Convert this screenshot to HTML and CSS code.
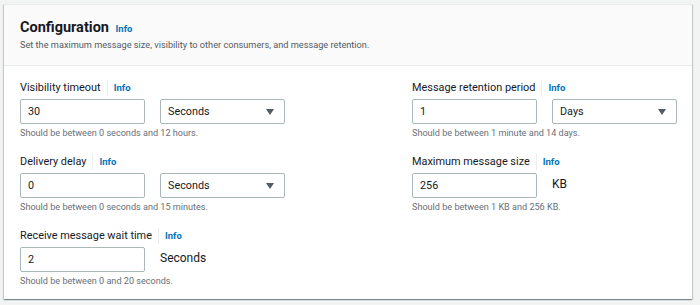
FILE: index.html
```html
<!DOCTYPE html>
<html lang="en">
<head>
  <meta charset="UTF-8" />
  <title>Configuration</title>
  <link rel="stylesheet" href="styles.css">
</head>
<body>
  <div class="panel">
    <div class="panel-header">
      <h2>Configuration <a class="info" href="#">Info</a></h2>
      <p class="desc">Set the maximum message size, visibility to other consumers, and message retention.</p>
    </div>

    <div class="panel-body">
      <div class="field">
        <div class="label">Visibility timeout <span class="sep"></span><a class="info" href="#">Info</a></div>
        <div class="controls">
          <div class="input">30</div>
          <div class="select">Seconds <span class="arrow"></span></div>
        </div>
        <div class="hint">Should be between 0 seconds and 12 hours.</div>
      </div>

      <div class="field">
        <div class="label">Message retention period <span class="sep"></span><a class="info" href="#">Info</a></div>
        <div class="controls">
          <div class="input">1</div>
          <div class="select">Days <span class="arrow"></span></div>
        </div>
        <div class="hint">Should be between 1 minute and 14 days.</div>
      </div>

      <div class="field">
        <div class="label">Delivery delay <span class="sep"></span><a class="info" href="#">Info</a></div>
        <div class="controls">
          <div class="input">0</div>
          <div class="select">Seconds <span class="arrow"></span></div>
        </div>
        <div class="hint">Should be between 0 seconds and 15 minutes.</div>
      </div>

      <div class="field">
        <div class="label">Maximum message size <span class="sep"></span><a class="info" href="#">Info</a></div>
        <div class="controls">
          <div class="input">256</div>
          <div class="unit">KB</div>
        </div>
        <div class="hint">Should be between 1 KB and 256 KB.</div>
      </div>

      <div class="field">
        <div class="label">Receive message wait time <span class="sep"></span><a class="info" href="#">Info</a></div>
        <div class="controls">
          <div class="input">2</div>
          <div class="unit">Seconds</div>
        </div>
        <div class="hint">Should be between 0 and 20 seconds.</div>
      </div>
    </div>
  </div>
</body>
</html>
```

FILE: styles.css
```css
body {
  margin: 0;
  padding: 4px;
  background: #f2f3f3;
  color: #16191f;
  font-family: Roboto, "Liberation Sans", sans-serif;
}
.panel {
  width: 688px;
  height: 295px;
  box-sizing: border-box;
  background: #ffffff;
  border-top: 1px solid #eaeded;
  box-shadow: 0 1px 1px 0 rgba(0, 28, 36, 0.3), 1px 1px 1px 0 rgba(0, 28, 36, 0.15), -1px 1px 1px 0 rgba(0, 28, 36, 0.15);
}
.panel-header {
  background: #fafafa;
  border-bottom: 1px solid #eaeded;
  padding: 13px 16px 14px;
}
h2 {
  margin: 0;
  font-size: 14.5px;
  line-height: 20px;
  font-weight: 700;
}
.info {
  color: #0073bb;
  font-size: 9.5px;
  font-weight: 700;
  text-decoration: none;
}
h2 .info {
  margin-left: 3px;
}
.desc {
  margin: 0;
  font-size: 9.2px;
  line-height: 12px;
  color: #545b64;
}
.panel-body {
  display: grid;
  grid-template-columns: 265px 265px;
  justify-content: space-between;
  row-gap: 14px;
  padding: 14px 15px 0 16px;
}
.label {
  display: flex;
  align-items: center;
  font-size: 10.9px;
  line-height: 16px;
}
.sep {
  width: 1px;
  height: 16px;
  background: #eaeded;
  margin: 0 6px;
}
.controls {
  display: flex;
  align-items: center;
  gap: 15px;
  margin-top: 3px;
}
.input, .select {
  width: 125px;
  height: 25px;
  box-sizing: border-box;
  border: 1px solid #aab7b8;
  border-radius: 2px;
  padding: 0 7px;
  font-size: 10.8px;
  line-height: 23px;
}
.select {
  display: flex;
  justify-content: space-between;
  align-items: center;
  padding-right: 10px;
}
.arrow {
  width: 0;
  height: 0;
  border-left: 4.5px solid transparent;
  border-right: 4.5px solid transparent;
  border-top: 6px solid #545b64;
}
.unit {
  font-size: 12px;
  color: #16191f;
  margin-top: -4px;
}
.hint {
  margin-top: 2px;
  font-size: 9.1px;
  line-height: 14px;
  color: #687078;
}
```
